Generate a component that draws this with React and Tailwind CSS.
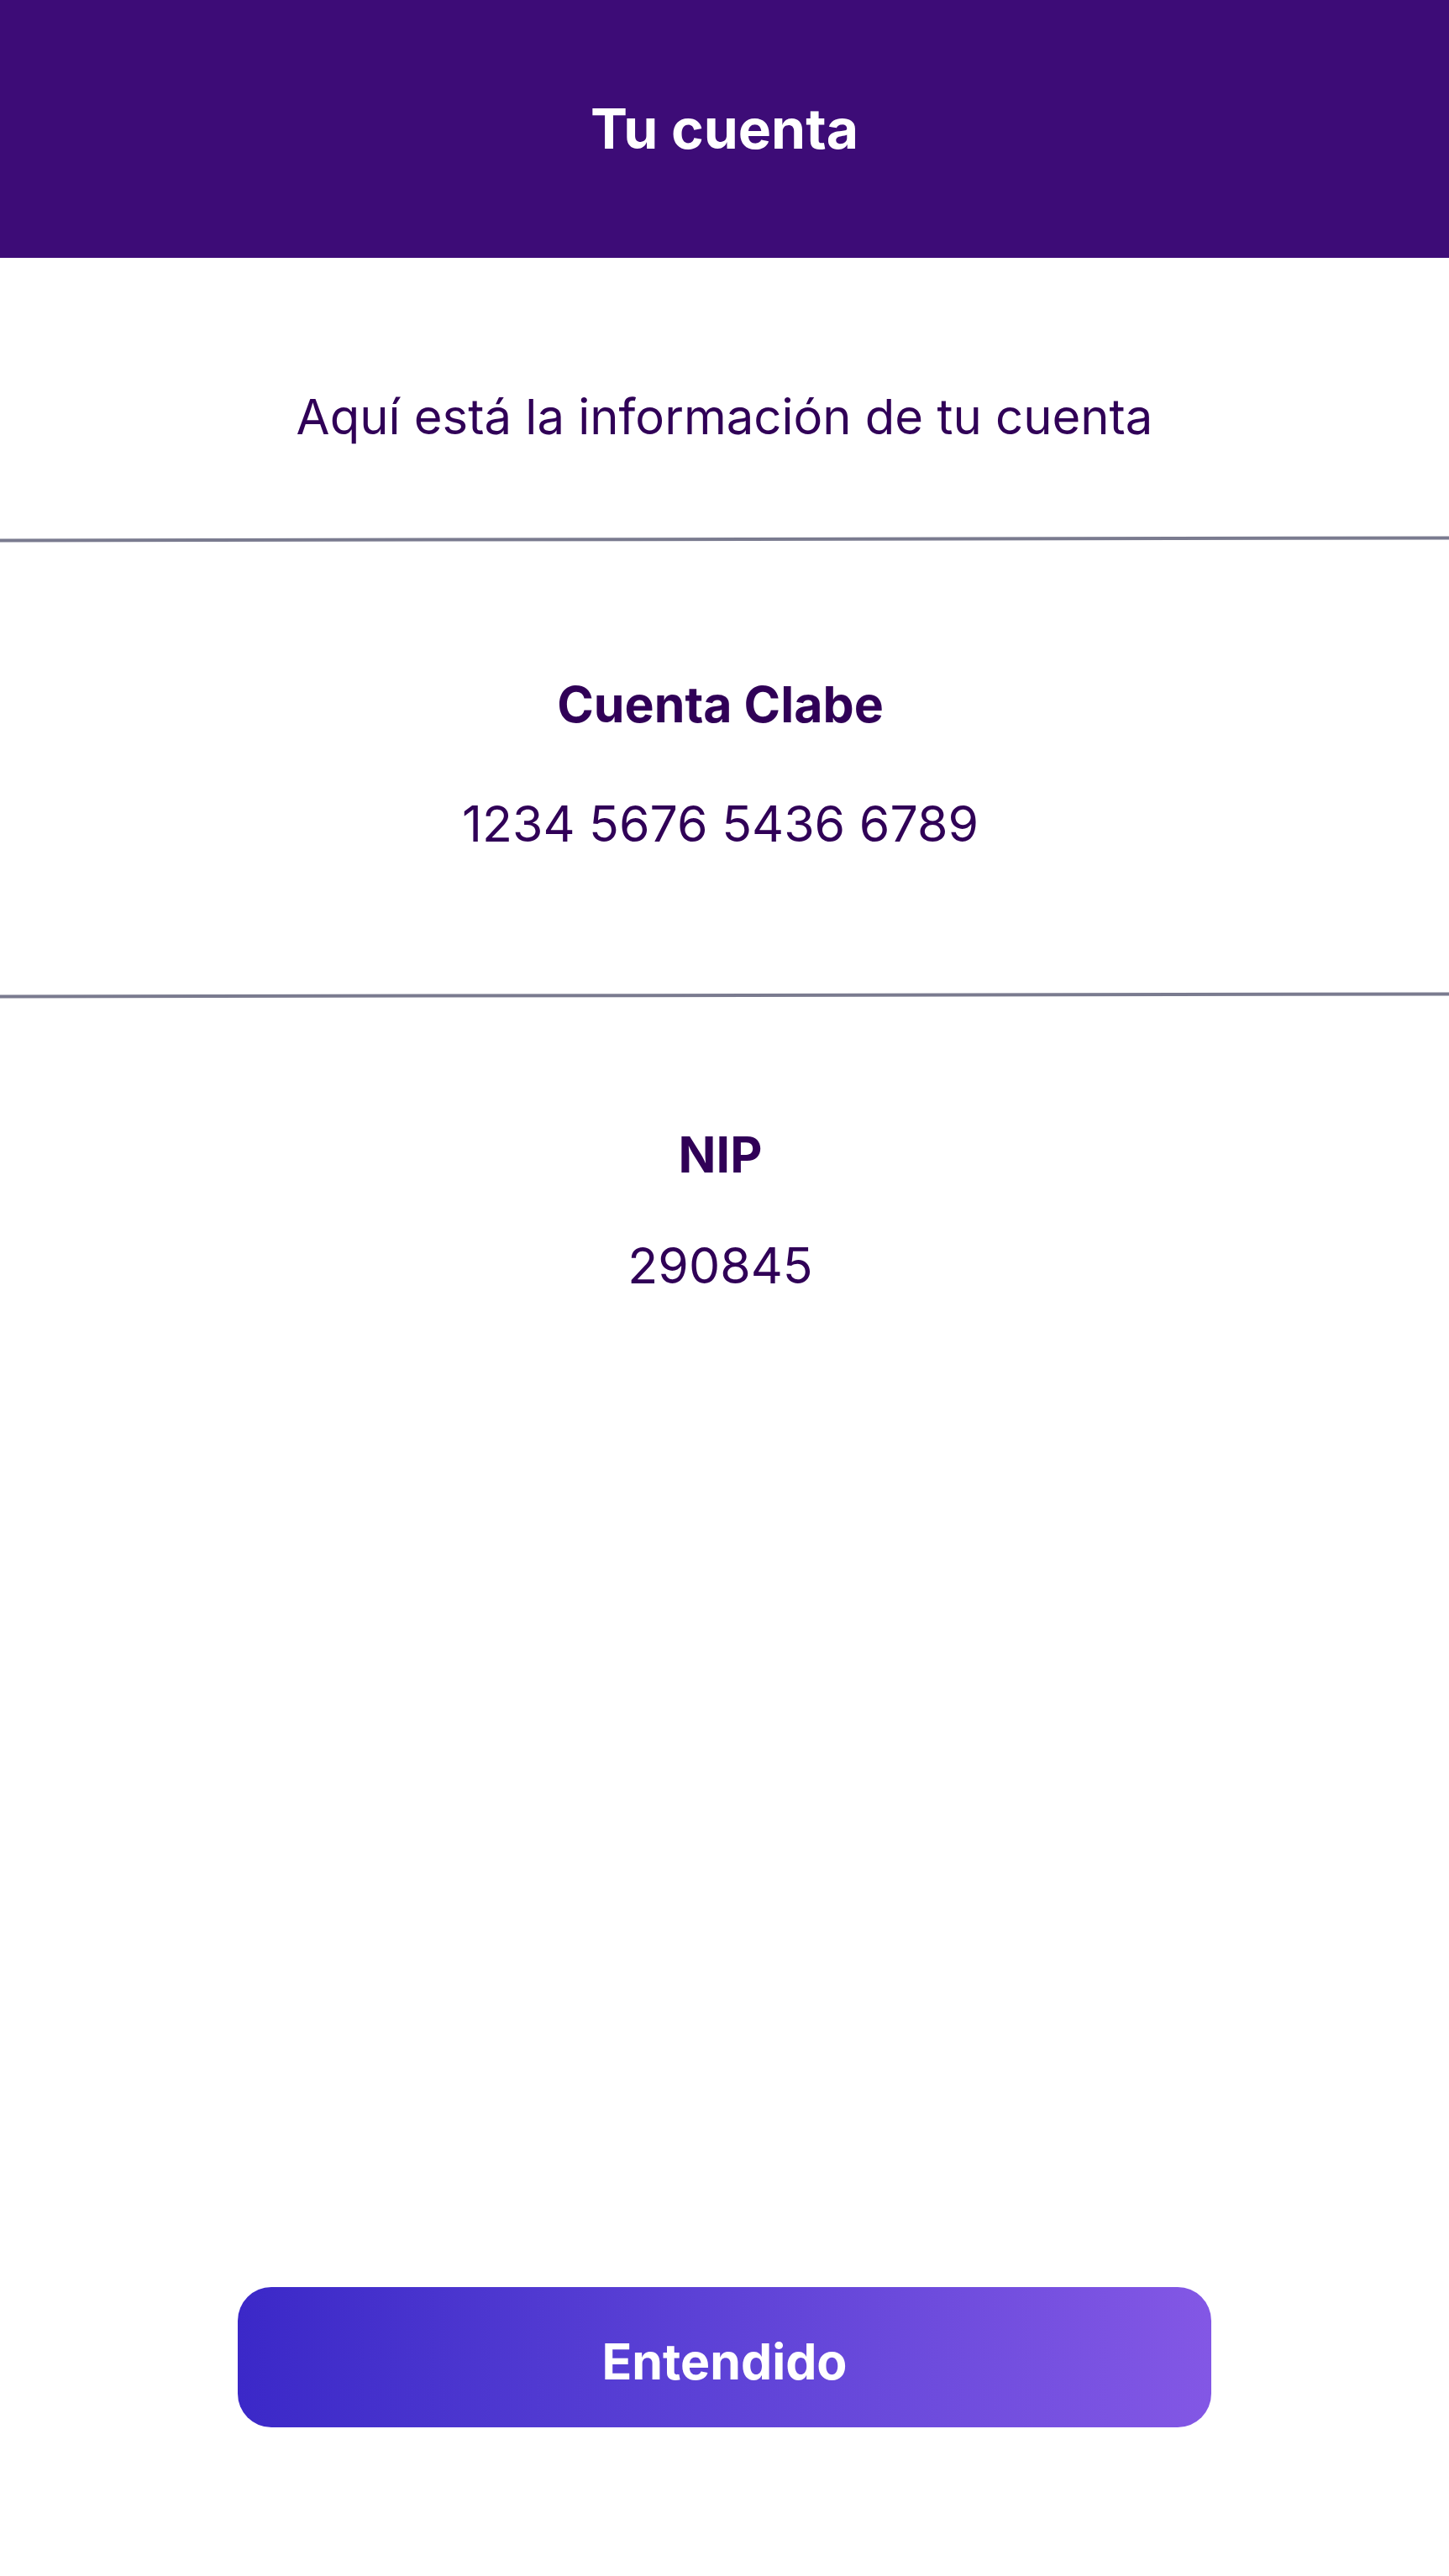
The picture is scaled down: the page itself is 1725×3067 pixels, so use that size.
const font = { fontFamily: 'Inter, "Noto Sans", sans-serif' };

const Divider = () => (
  <div className="h-[4px] w-full bg-[#7a7b8f] -rotate-[0.1deg]" />
);

const InfoBlock = ({ label, value, gap, className }) => (
  <div className={`flex flex-col items-center pr-[10px] ${className}`}>
    <h2 className="text-[59px] leading-[71px] font-bold text-[#300057]">{label}</h2>
    <p className={`text-[59px] leading-[71px] text-[#300057] ${gap}`}>{value}</p>
  </div>
);

export default function App() {
  return (
    <div className="min-h-screen flex flex-col bg-white" style={font}>
      <header className="h-[307px] bg-[#3d0c77] flex items-center justify-center">
        <h1 className="text-[66px] font-bold text-white">Tu cuenta</h1>
      </header>

      <section className="pt-[154px] pb-[108px] text-center">
        <p className="text-[58px] leading-[71px] text-[#300057]">
          Aquí está la información de tu cuenta
        </p>
      </section>
      <Divider />

      <InfoBlock
        label="Cuenta Clabe"
        value="1234 5676 5436 6789"
        gap="mt-[71px]"
        className="pt-[159px] pb-[167px]"
      />
      <Divider />

      <InfoBlock label="NIP" value="290845" gap="mt-[61px]" className="pt-[152px]" />

      <div className="flex-1" />

      <div className="flex justify-center pb-[177px]">
        <button className="w-[1159px] h-[167px] pt-[12px] rounded-[40px] bg-gradient-to-r from-[#3b28c8] to-[#8357e5] text-white text-[59px] font-bold">
          Entendido
        </button>
      </div>
    </div>
  );
}
